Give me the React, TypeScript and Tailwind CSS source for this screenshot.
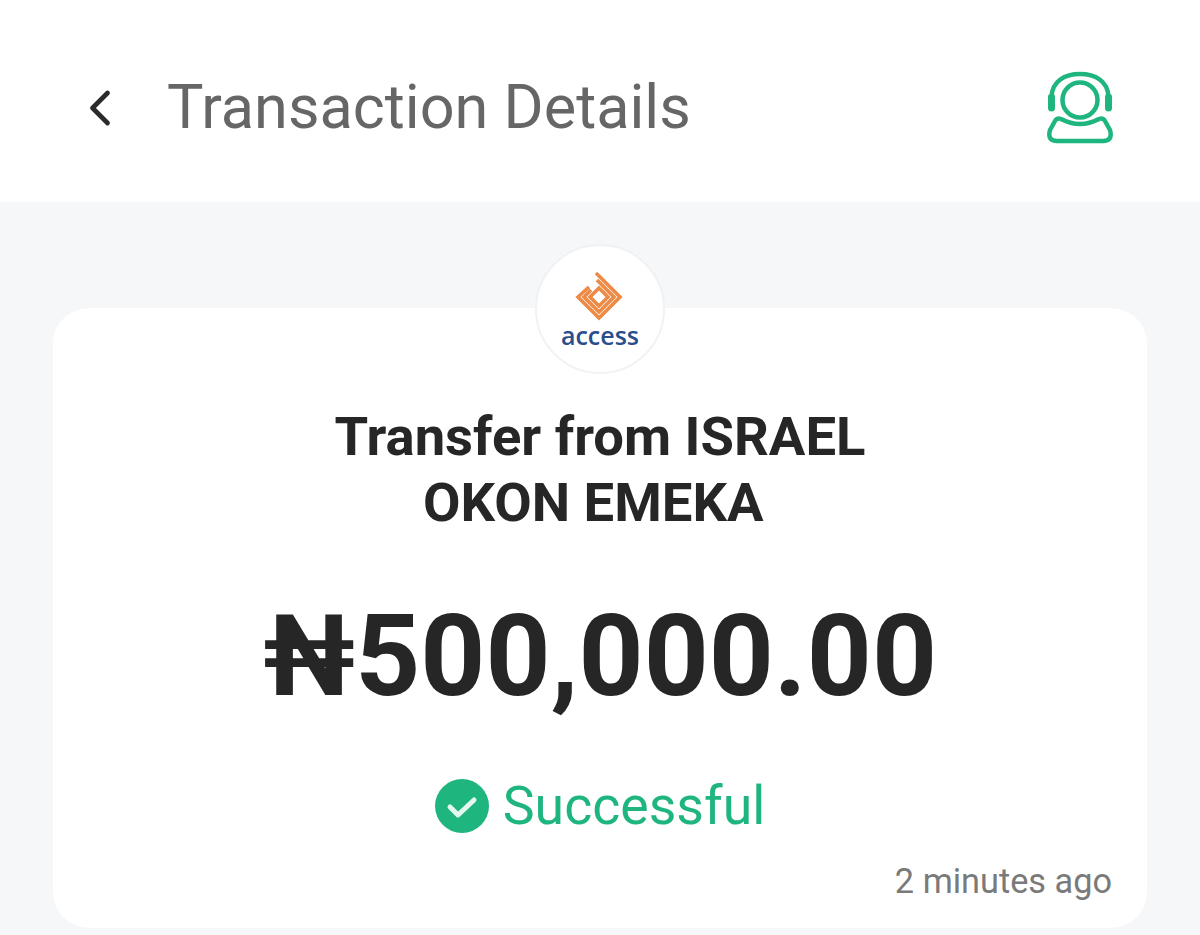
import { ChevronLeft } from 'lucide-react';

function SupportIcon() {
  return (
    <svg width="100" height="100" viewBox="0 0 100 100" fill="none" stroke="#1fb57f" strokeWidth="4.5" strokeLinecap="round" strokeLinejoin="round">
      <circle cx="50" cy="39" r="17.5" />
      <path d="M21.5 36 C22 20 35 13 50 13 C65 13 78 20 78.5 36" />
      <path d="M21.5 36 L21.5 47" strokeWidth="7" />
      <path d="M78.5 36 L78.5 47" strokeWidth="7" />
      <path d="M31 58 Q50 68 69 58 Q73 56.500 75 60 L80 69 Q83 80 73 80 L27 80 Q17 80 20 69 L25 60 Q27 56.500 31 58 Z" />
    </svg>
  );
}

function AccessLogo() {
  return (
    <svg width="50" height="50" viewBox="0 0 50 50" fill="none" stroke="#ee8a45" strokeWidth="3.6" strokeLinejoin="miter">
      <path d="M21 2 L45 26 L24 47 L3 26 L14 16" />
      <path d="M22 9 L39 26 L24 41 L9 26 L16 19" />
      <path d="M24 17 L33 26 L24 35 L15 26 Z" />
    </svg>
  );
}

export default function App() {
  return (
    <div className="h-[935px] overflow-hidden bg-[#f6f7f9] font-['Roboto',sans-serif]">
      {/* Header */}
      <div className="flex h-[202px] items-center justify-between bg-white pl-[70px] pr-[80px] pt-[14px]">
        <div className="flex items-center">
          <ChevronLeft size={60} strokeWidth={1.9} className="text-[#2b2b2b]" />
          <h1 className="ml-[37px] text-[61.200px] font-normal leading-none text-[#666666]">Transaction Details</h1>
        </div>
        <div className="-mr-[10px] mt-[6px]">
          <SupportIcon />
        </div>
      </div>

      {/* Summary card */}
      <div className="px-[53px] pt-[106px]">
        <div className="flex h-[620px] flex-col items-center rounded-[36px] bg-white px-[35px]">
          <div className="-mt-[64px] flex h-[130px] w-[130px] flex-col items-center rounded-full border-2 border-[#f1f2f4] bg-white pt-[25px]">
            <AccessLogo />
            <span className="mt-[2px] font-['Open_Sans',sans-serif] text-[25px] font-semibold leading-none text-[#2a4d8c]">access</span>
          </div>
          <h2 className="mt-[30px] text-center text-[54.400px] font-bold leading-[66px] text-[#262626]">
            Transfer from ISRAEL
            <br />
            OKON EMEKA&nbsp;
          </h2>
          <p className="mt-[64px] text-[113.500px] font-bold leading-none text-[#262626]">₦500,000.00</p>
          <div className="mt-[65px] flex items-center gap-[14px]">
            <svg width="54" height="54" viewBox="0 0 54 54" fill="none">
              <circle cx="27" cy="27" r="27" fill="#1fb57f" />
              <path d="M15 28 L23 36 L39 21" stroke="#e4f8ef" strokeWidth="5" strokeLinecap="round" strokeLinejoin="round" />
            </svg>
            <span className="text-[53.600px] leading-none text-[#1fb57f]">Successful</span>
          </div>
          <p className="mt-[31px] self-end text-[34.300px] leading-none text-[#7a7a7a]">2 minutes ago</p>
        </div>
      </div>
    </div>
  );
}
